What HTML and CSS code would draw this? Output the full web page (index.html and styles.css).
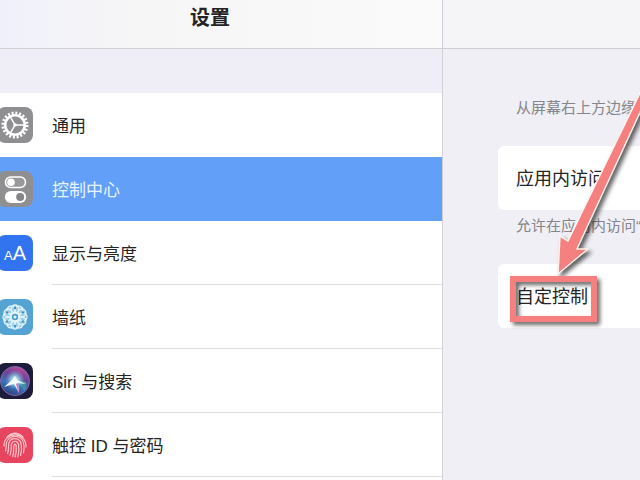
FILE: index.html
```html
<!DOCTYPE html>
<html lang="zh-CN">
<head>
<meta charset="utf-8">
<title>设置</title>
<link rel="stylesheet" href="styles.css">
</head>
<body>
<div class="app">
  <aside class="sidebar">
    <header class="bar bar-title"><h1>设置</h1></header>
    <nav class="menu">
      <a class="row" href="#general">
        <svg class="icon" viewBox="0 0 36 36" aria-hidden="true">
          <rect width="36" height="36" rx="8" fill="#8f8f91"/>
          <g fill="none" stroke="#fff">
            <circle cx="18" cy="18" r="12" stroke-width="3" stroke-dasharray="2 1.77"/>
            <circle cx="18" cy="18" r="9.8" stroke-width="2.6"/>
            <path d="M18 18H27M18 18L13.5 10.2M18 18L13.5 25.8" stroke-width="1.5"/>
          </g>
          <circle cx="18" cy="18" r="1.8" fill="#fff"/>
        </svg>
        <span class="label">通用</span>
      </a>
      <a class="row selected" href="#control" aria-current="page">
        <svg class="icon" viewBox="0 0 36 36" aria-hidden="true">
          <rect width="36" height="36" rx="8" fill="#8f8f91"/>
          <rect x="8.5" y="6" width="20" height="10.5" rx="5.2" fill="#98989a" stroke="#fff" stroke-width="1.6"/>
          <circle cx="14" cy="11.2" r="3.8" fill="#fff"/>
          <rect x="7.8" y="20" width="21.4" height="12" rx="6" fill="#fff"/>
          <circle cx="23.2" cy="26" r="4" fill="#858587"/>
        </svg>
        <span class="label">控制中心</span>
      </a>
      <a class="row" href="#display">
        <span class="icon icon-text" aria-hidden="true"><span class="small-a">A</span><span class="big-a">A</span></span>
        <span class="label">显示与亮度</span>
      </a>
      <a class="row" href="#wallpaper">
        <svg class="icon" viewBox="0 0 36 36" aria-hidden="true">
          <defs><g id="petals">
            <circle cx="18" cy="10" r="4"/><circle cx="18" cy="26" r="4"/>
            <circle cx="11.1" cy="14" r="4"/><circle cx="24.9" cy="22" r="4"/>
            <circle cx="11.1" cy="22" r="4"/><circle cx="24.9" cy="14" r="4"/>
          </g></defs>
          <rect width="36" height="36" rx="8" fill="#55a3d2"/>
          <g fill="#d9f2fb" fill-opacity=".35" stroke="#e4f6fd" stroke-width="1.3">
            <use href="#petals"/>
            <use href="#petals" transform="rotate(30 18 18)"/>
          </g>
          <g fill="#4291c2">
            <circle cx="18" cy="9" r="1.3"/><circle cx="18" cy="27" r="1.3"/>
            <circle cx="10.2" cy="13.5" r="1.3"/><circle cx="25.8" cy="13.5" r="1.3"/>
            <circle cx="10.2" cy="22.5" r="1.3"/><circle cx="25.8" cy="22.5" r="1.3"/>
          </g>
          <circle cx="18" cy="18" r="4" fill="#4e9dcc" stroke="#e4f6fd" stroke-width="1.5"/>
          <circle cx="18" cy="18" r="1.6" fill="#e4f6fd"/>
        </svg>
        <span class="label">墙纸</span>
      </a>
      <a class="row" href="#siri">
        <svg class="icon" viewBox="0 0 36 36" aria-hidden="true">
          <defs>
            <linearGradient id="orb" x1="0.7" y1="0" x2="0.3" y2="1">
              <stop offset="0" stop-color="#c04a9c"/><stop offset=".35" stop-color="#6a4396"/>
              <stop offset=".65" stop-color="#3a71b8"/><stop offset="1" stop-color="#2b3c78"/>
            </linearGradient>
            <radialGradient id="glow">
              <stop offset="0" stop-color="#fff"/><stop offset=".35" stop-color="#a9e8f5" stop-opacity=".8"/>
              <stop offset="1" stop-color="#58bddb" stop-opacity="0"/>
            </radialGradient>
          </defs>
          <rect width="36" height="36" rx="8" fill="#1d1c3b"/>
          <circle cx="18" cy="18" r="14.5" fill="url(#orb)" stroke="#7d6bb0" stroke-width="1"/>
          <path d="M18 16L29 19Q31 23 27 28Q24 21 18 16Z" fill="#36a5a0" opacity=".7"/>
          <circle cx="18" cy="17" r="10" fill="url(#glow)"/>
          <path d="M18 13L20 17L29 21L21 20L22 30L17 21L7 24L15 17Z" fill="#fff" opacity=".9"/>
          <path d="M19 21L22 31L21 20Z" fill="#e26cc0"/>
        </svg>
        <span class="label">Siri 与搜索</span>
      </a>
      <a class="row" href="#touchid">
        <svg class="icon" viewBox="0 0 36 36" aria-hidden="true">
          <rect width="36" height="36" rx="8" fill="#e7455f"/>
          <g fill="none" stroke="#ffc5cb" stroke-width="1.2" stroke-linecap="round">
            <path d="M10 10Q18 2.500 26 10"/>
            <path d="M7 19C6.500 4 29.500 4 29 20"/>
            <path d="M8.500 24C9.500 21 9 19 9.300 16.500C11 7 25 7 26.700 16.500Q27.500 21 26.500 26"/>
            <path d="M10.500 26.500C12.500 22 11 19 11.800 16.500C13.500 10 22.500 10 24.200 17Q25 23 23.600 28.500"/>
            <path d="M13 28C15 24 13.700 20 14.500 17C16 13 20.500 13.500 21.600 17.500Q22.500 24 20.700 30"/>
            <path d="M15.700 29.500C17.600 25 16 20 17 18C18 16.500 19 17.500 19.200 19Q19.700 25 18 30"/>
          </g>
        </svg>
        <span class="label">触控 ID 与密码</span>
      </a>
    </nav>
  </aside>
  <main class="detail">
    <div class="bar"></div>
    <div class="content">
      <p class="note">从屏幕右上方边缘</p>
      <section class="card">应用内访问</section>
      <p class="note">允许在应用内访问“</p>
      <section class="card">自定控制</section>
    </div>
    <svg class="callout" viewBox="0 0 200 260" aria-hidden="true">
      <rect x="70" y="199" width="81" height="40" fill="none" stroke="#f67f80" stroke-width="6"/>
      <path d="M115 194L117 156L125 161L212 -18L212 0L134 169L145 169Z" fill="#f67f80" stroke="#fff3ec" stroke-width="1.500" stroke-linejoin="round"/>
    </svg>
  </main>
</div>
</body>
</html>
```
FILE: styles.css
```css
* {
  box-sizing: border-box;
}

body {
  margin: 0;
  font-family: "Liberation Sans", "Noto Sans CJK SC", sans-serif;
  font-size: 18px;
  line-height: 24px;
  color: #242424;
}

.app {
  display: flex;
  height: 100vh;
  overflow: hidden;
  white-space: nowrap;
}

.sidebar {
  display: flex;
  flex: 0 0 443px;
  flex-direction: column;
  background: #efeef7;
  border-right: 1px solid #d0d0d5;
}

.bar {
  height: 49px;
  flex: none;
  background: #f5f5f7;
  border-bottom: 1px solid #cfcfd1;
}

.bar-title {
  padding: 6px 22px 0 0;
  text-align: center;
  background: linear-gradient(90deg, #f0f0fb, #f6f6f7 30%, #fafafa);
}

h1 {
  margin: 0;
  font-size: 20px;
  line-height: 24px;
  font-weight: 700;
}

.menu {
  flex: 1 0 auto;
  margin-top: 44px;
  background: #fff;
  font-size: 17px;
}

.row {
  display: flex;
  align-items: center;
  height: 64px;
  color: inherit;
  text-decoration: none;
}

.icon {
  flex: none;
  width: 36px;
  height: 36px;
  margin-left: -3px;
}

.icon-text {
  display: flex;
  align-items: baseline;
  justify-content: center;
  border-radius: 8px;
  background: #3273f0;
  color: #fff;
  line-height: 36px;
}

.small-a {
  font-size: 13px;
}

.big-a {
  font-size: 20px;
}

.label {
  flex: 1;
  height: 64px;
  margin-left: 19px;
  padding-top: 3px;
  line-height: 62px;
  border-bottom: 1px solid #dededf;
}

.selected {
  background: #629ff8;
  color: #e8f4ff;
}

.selected .label,
.row:first-child .label {
  border-color: transparent;
}

.detail {
  position: relative;
  flex: 1;
  min-width: 0;
  background: #efeff5;
}

.content {
  padding: 47px 0 0 55px;
}

.note {
  margin: 0;
  padding: 0 0 0 18px;
  height: 50px;
  font-size: 15px;
  color: #85858b;
}

.card {
  height: 64px;
  padding: 1px 0 0 18px;
  line-height: 64px;
  background: #fff;
  border-radius: 6px 0 0 6px;
}

.card + .note {
  height: 54px;
  padding-top: 4px;
}

.callout {
  position: absolute;
  top: 80px;
  left: 0;
  width: 200px;
  height: 260px;
  filter: drop-shadow(3px 3px 2px #00000099);
}
```
